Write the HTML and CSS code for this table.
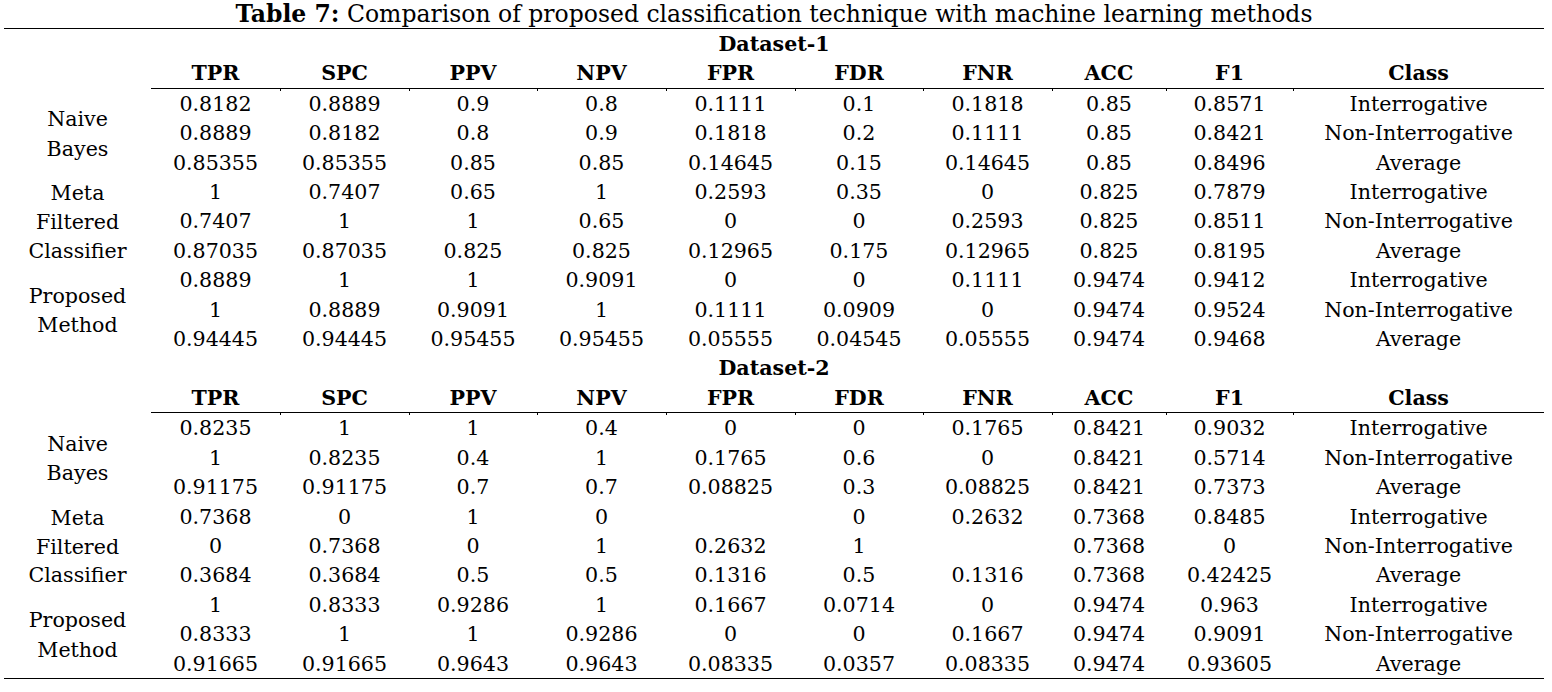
FILE: index.html
```html
<!DOCTYPE html>
<html lang="en">
<head>
<meta charset="utf-8">
<title>Table 7</title>
<link rel="stylesheet" href="styles.css">
</head>
<body>
<div class="page">
  <div class="title"><b>Table 7:</b> Comparison of proposed classification technique with machine learning methods</div>
  <table class="results">
    <colgroup>
      <col class="c-label"><col class="c-num"><col class="c-num"><col class="c-num8"><col class="c-num"><col class="c-num"><col class="c-num8"><col class="c-num"><col class="c-acc"><col class="c-f1"><col class="c-class">
    </colgroup>
    <tbody>
      <tr><td colspan="11" class="ds">Dataset-1</td></tr>
      <tr class="head"><td class="blank"></td><td class="first">TPR</td><td>SPC</td><td>PPV</td><td>NPV</td><td>FPR</td><td>FDR</td><td>FNR</td><td>ACC</td><td>F1</td><td>Class</td></tr>
      <tr><td rowspan="3" class="label">Naive<br>Bayes</td><td>0.8182</td><td>0.8889</td><td>0.9</td><td>0.8</td><td>0.1111</td><td>0.1</td><td>0.1818</td><td>0.85</td><td>0.8571</td><td>Interrogative</td></tr>
      <tr><td>0.8889</td><td>0.8182</td><td>0.8</td><td>0.9</td><td>0.1818</td><td>0.2</td><td>0.1111</td><td>0.85</td><td>0.8421</td><td>Non-Interrogative</td></tr>
      <tr><td>0.85355</td><td>0.85355</td><td>0.85</td><td>0.85</td><td>0.14645</td><td>0.15</td><td>0.14645</td><td>0.85</td><td>0.8496</td><td>Average</td></tr>
      <tr><td rowspan="3" class="label three">Meta<br>Filtered<br>Classifier</td><td>1</td><td>0.7407</td><td>0.65</td><td>1</td><td>0.2593</td><td>0.35</td><td>0</td><td>0.825</td><td>0.7879</td><td>Interrogative</td></tr>
      <tr><td>0.7407</td><td>1</td><td>1</td><td>0.65</td><td>0</td><td>0</td><td>0.2593</td><td>0.825</td><td>0.8511</td><td>Non-Interrogative</td></tr>
      <tr><td>0.87035</td><td>0.87035</td><td>0.825</td><td>0.825</td><td>0.12965</td><td>0.175</td><td>0.12965</td><td>0.825</td><td>0.8195</td><td>Average</td></tr>
      <tr><td rowspan="3" class="label">Proposed<br>Method</td><td>0.8889</td><td>1</td><td>1</td><td>0.9091</td><td>0</td><td>0</td><td>0.1111</td><td>0.9474</td><td>0.9412</td><td>Interrogative</td></tr>
      <tr><td>1</td><td>0.8889</td><td>0.9091</td><td>1</td><td>0.1111</td><td>0.0909</td><td>0</td><td>0.9474</td><td>0.9524</td><td>Non-Interrogative</td></tr>
      <tr><td>0.94445</td><td>0.94445</td><td>0.95455</td><td>0.95455</td><td>0.05555</td><td>0.04545</td><td>0.05555</td><td>0.9474</td><td>0.9468</td><td>Average</td></tr>

      <tr><td colspan="11" class="ds">Dataset-2</td></tr>
      <tr class="head"><td class="blank"></td><td class="first">TPR</td><td>SPC</td><td>PPV</td><td>NPV</td><td>FPR</td><td>FDR</td><td>FNR</td><td>ACC</td><td>F1</td><td>Class</td></tr>
      <tr><td rowspan="3" class="label">Naive<br>Bayes</td><td>0.8235</td><td>1</td><td>1</td><td>0.4</td><td>0</td><td>0</td><td>0.1765</td><td>0.8421</td><td>0.9032</td><td>Interrogative</td></tr>
      <tr><td>1</td><td>0.8235</td><td>0.4</td><td>1</td><td>0.1765</td><td>0.6</td><td>0</td><td>0.8421</td><td>0.5714</td><td>Non-Interrogative</td></tr>
      <tr><td>0.91175</td><td>0.91175</td><td>0.7</td><td>0.7</td><td>0.08825</td><td>0.3</td><td>0.08825</td><td>0.8421</td><td>0.7373</td><td>Average</td></tr>
      <tr><td rowspan="3" class="label three">Meta<br>Filtered<br>Classifier</td><td>0.7368</td><td>0</td><td>1</td><td>0</td><td></td><td>0</td><td>0.2632</td><td>0.7368</td><td>0.8485</td><td>Interrogative</td></tr>
      <tr><td>0</td><td>0.7368</td><td>0</td><td>1</td><td>0.2632</td><td>1</td><td></td><td>0.7368</td><td>0</td><td>Non-Interrogative</td></tr>
      <tr><td>0.3684</td><td>0.3684</td><td>0.5</td><td>0.5</td><td>0.1316</td><td>0.5</td><td>0.1316</td><td>0.7368</td><td>0.42425</td><td>Average</td></tr>
      <tr><td rowspan="3" class="label">Proposed<br>Method</td><td>1</td><td>0.8333</td><td>0.9286</td><td>1</td><td>0.1667</td><td>0.0714</td><td>0</td><td>0.9474</td><td>0.963</td><td>Interrogative</td></tr>
      <tr><td>0.8333</td><td>1</td><td>1</td><td>0.9286</td><td>0</td><td>0</td><td>0.1667</td><td>0.9474</td><td>0.9091</td><td>Non-Interrogative</td></tr>
      <tr class="last"><td>0.91665</td><td>0.91665</td><td>0.9643</td><td>0.9643</td><td>0.08335</td><td>0.0357</td><td>0.08335</td><td>0.9474</td><td>0.93605</td><td>Average</td></tr>
    </tbody>
  </table>
</div>
</body>
</html>
```

FILE: styles.css
```css
html, body {
  margin: 0;
  padding: 0;
  background: #ffffff;
}

body {
  font-family: "DejaVu Serif", "Liberation Serif", serif;
  color: #000000;
}

.page {
  width: 1540px;
  margin-left: 4px;
}

.title {
  height: 28px;
  line-height: 28px;
  text-align: center;
  font-size: 23.5px;
  white-space: nowrap;
}

.results {
  width: 1540px;
  table-layout: fixed;
  border-collapse: collapse;
  border-top: 1px solid #000;
  border-bottom: 1px solid #000;
}

.c-label { width: 147px; }
.c-num { width: 129px; }
.c-num8 { width: 128px; }
.c-acc { width: 114px; }
.c-f1 { width: 127px; }
.c-class { width: 251px; }

.results td {
  padding: 2px 0 0 0;
  height: 27.4px;
  line-height: 27.4px;
  font-size: 20.6px;
  text-align: center;
  vertical-align: middle;
  white-space: nowrap;
}

.results td.ds {
  font-weight: bold;
}

.results tr.head td {
  font-weight: bold;
  border-bottom: 1px solid #000;
  position: relative;
}

.results tr.head td.blank {
  border-bottom: none;
}

.results tr.head td::after {
  content: "";
  position: absolute;
  left: 0;
  bottom: -3px;
  width: 1px;
  height: 2px;
  background: #000;
}

.results tr.head td.blank::after,
.results tr.head td.first::after {
  display: none;
}

.results td.label {
  height: auto;
  line-height: 29.4px;
  padding: 4px 0 0 0;
}

.results td.label.three {
  line-height: 28.6px;
  padding: 2.4px 0 0 0;
}

.results tr.last td {
  position: relative;
}

.results tr.last td::after {
  content: "";
  position: absolute;
  left: 0;
  bottom: -3px;
  width: 1px;
  height: 2px;
  background: #000;
}
```
